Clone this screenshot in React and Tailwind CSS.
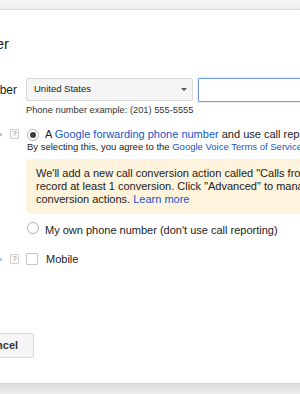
import React from "react";

function Help() {
  return (
    <span className="inline-flex h-[10px] w-[9px] items-center justify-center rounded-[1px] border border-[#cfcfcf] bg-[#fafafa] text-[7.5px] leading-none text-[#8a8a8a]">
      ?
    </span>
  );
}

function Radio({ checked }) {
  return (
    <span className="inline-flex h-[12px] w-[12px] shrink-0 items-center justify-center rounded-full border border-[#b3b3b3] bg-white">
      {checked ? <span className="h-[6px] w-[6px] rounded-full bg-[#3c3c3c]" /> : null}
    </span>
  );
}

export default function App() {
  return (
    <div className="flex h-[394px] w-[300px] flex-col overflow-hidden bg-white font-['Liberation_Sans',Arial,sans-serif] text-[#222]">
      <div className="h-[10px] shrink-0 border-b border-[#d9d9d9] bg-gradient-to-b from-[#f6f6f6] to-[#eeeeee]" />
      <div className="flex flex-1 flex-col">
        {/* title */}
        <div className="mt-[26px] flex">
          <div className="-ml-[191px] w-[200px] shrink-0 whitespace-nowrap text-right text-[15px] leading-[16px] text-[#222]">
            Add phone number
          </div>
        </div>

        {/* phone number row */}
        <div className="mt-[26px] flex items-start">
          <div className="-ml-[181px] flex h-[23px] w-[200px] shrink-0 items-center justify-end whitespace-nowrap pr-[2px] text-[12px] text-[#222]">
            Phone number
          </div>
          <div className="ml-[7px] flex shrink-0 flex-col">
            <div className="flex items-start">
              <div className="flex h-[23px] w-[167px] items-center justify-between rounded-[2px] border border-[#d8d8d8] bg-[#f5f5f5] pl-[7px] pr-[5px] text-[9.5px] text-[#222]">
                <span>United States</span>
                <span className="h-0 w-0 border-x-[3px] border-t-[3px] border-x-transparent border-t-[#555]" />
              </div>
              <div className="ml-[5px] h-[24px] w-[140px] rounded-[1px] border border-[#6b9be8] bg-white shadow-[0_0_2px_#a9c6f4]" />
            </div>
            <div className="mt-[2px] whitespace-nowrap text-[9.3px] leading-[12px] text-[#333]">
              Phone number example: (201) 555-5555
            </div>
          </div>
        </div>

        {/* call reporting row */}
        <div className="mt-[11px] flex items-start">
          <div className="-ml-[181px] flex h-[14px] w-[200px] shrink-0 items-center justify-end">
            <span className="mr-[8px] h-[3px] w-[3px] rounded-full bg-[#9cc7ee]" />
            <Help />
          </div>
          <div className="ml-[7px] flex shrink-0 flex-col">
            <div className="flex h-[14px] items-center whitespace-nowrap text-[11px] text-[#222]">
              <span className="ml-[1px]">
                <Radio checked />
              </span>
              <span className="ml-[6px]">
                A <span className="text-[#1a55c9]">Google forwarding phone number</span> and use call reporting
              </span>
            </div>
            <div className="ml-[1px] whitespace-nowrap text-[9.5px] leading-[12px] text-[#222]">
              By selecting this, you agree to the{" "}
              <span className="text-[#1a55c9]">Google Voice Terms of Service</span> and the Google Privacy Policy.
            </div>
            <div className="mt-[6px] w-[420px] whitespace-nowrap rounded-[4px] bg-[#fef3dc] px-[10px] py-[8px] text-[11px] leading-[13px] text-[#222]">
              We'll add a new call conversion action called "Calls from ads" to your account.
              <br />
              record at least 1 conversion. Click "Advanced" to manage your call
              <br />
              conversion actions. <span className="text-[#1a55c9]">Learn more</span>
            </div>
            <div className="mt-[9px] flex h-[14px] items-center whitespace-nowrap text-[11px] text-[#222]">
              <span className="ml-[1px]">
                <Radio />
              </span>
              <span className="ml-[6px]">My own phone number (don't use call reporting)</span>
            </div>
          </div>
        </div>

        {/* device row */}
        <div className="mt-[15px] flex items-start">
          <div className="-ml-[181px] flex h-[14px] w-[200px] shrink-0 items-center justify-end">
            <span className="mr-[8px] h-[3px] w-[3px] rounded-full bg-[#9cc7ee]" />
            <Help />
          </div>
          <div className="ml-[7px] flex h-[14px] items-center whitespace-nowrap text-[11px] text-[#222]">
            <span className="h-[12px] w-[12px] rounded-[1px] border border-[#c6c6c6] bg-white" />
            <span className="ml-[8px]">Mobile</span>
          </div>
        </div>

        {/* buttons */}
        <div className="mt-[67px] flex">
          <div className="-ml-[34px] flex h-[25px] shrink-0 items-center rounded-[2px] border border-[#d9d9d9] bg-[#f5f5f5] px-[15px] text-[11px] font-bold text-[#333]">
            Cancel
          </div>
        </div>
        <div className="flex-1" />
      </div>
      <div className="h-[11px] shrink-0 border-t border-[#d2d2d2] bg-gradient-to-b from-[#dedede] to-[#ececec]" />
    </div>
  );
}
